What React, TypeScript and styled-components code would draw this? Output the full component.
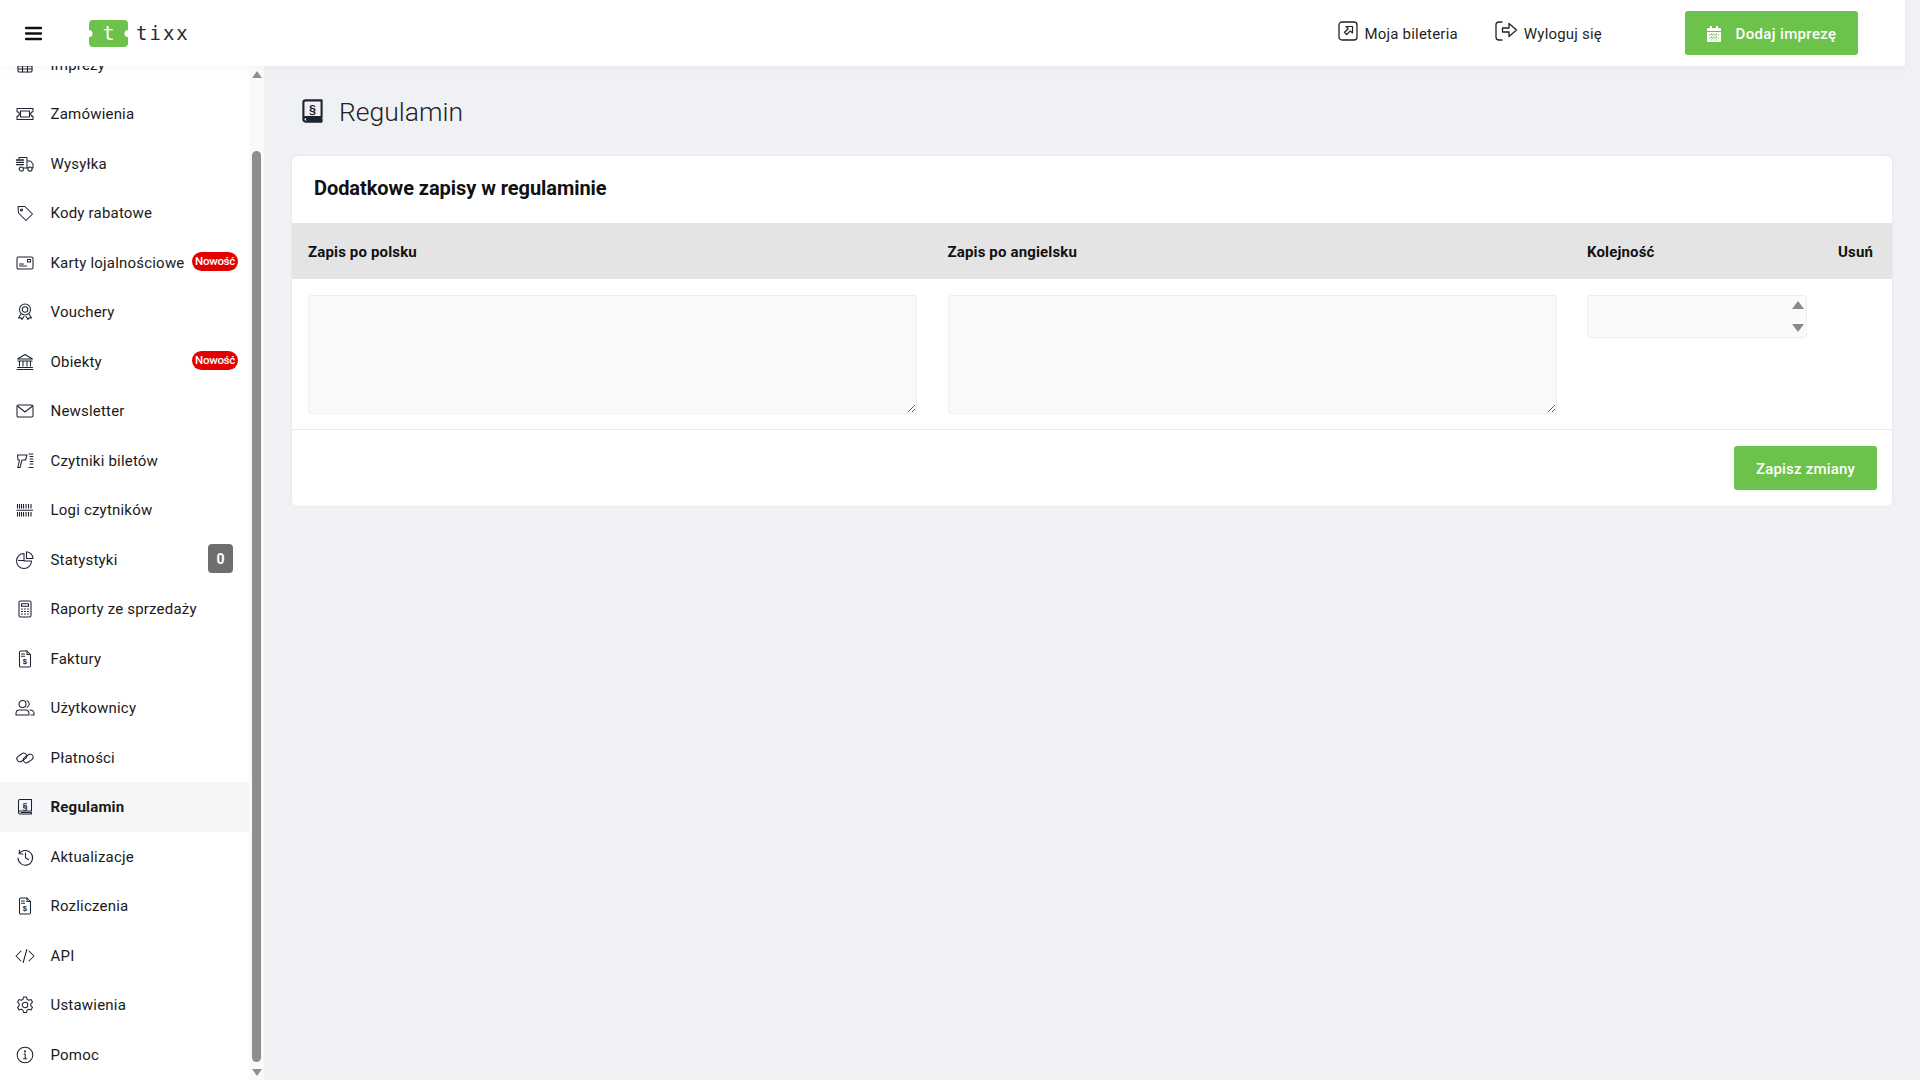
import React from "react";
import styled, { createGlobalStyle } from "styled-components";

const Global = createGlobalStyle`
  html, body { margin: 0; padding: 0; height: 100%; overflow: hidden; background: #f0f1f5; }
  body { font-family: Roboto, "Liberation Sans", sans-serif; color: #1a1a1a; }
  * { box-sizing: border-box; }
`;

const Page = styled.div`width: 1920px; height: 1080px; display: flex; flex-direction: column; overflow: hidden;`;
const TopBar = styled.header`
  width: 1905px; height: 66px; flex: none; background: #fff; display: flex; align-items: center;
  padding: 0 47px 0 25px; position: relative; z-index: 2; box-shadow: 0 2px 8px rgba(0,0,0,.035);
`;
const Burger = styled.svg`width: 17px; height: 15px; flex: none; margin-right: 46px;`;
const Logo = styled.div`display: flex; align-items: center; gap: 7px;`;
const Ticket = styled.div`
  width: 41px; height: 27px; display: flex; align-items: center; justify-content: center; position: relative;
  color: #fff; font: 400 20px/27px "DejaVu Sans Mono", monospace;
`;
const TicketShape = styled.svg`position: absolute; inset: 0; width: 41px; height: 27px;`;
const TicketLetter = styled.span`position: relative;`;
const LogoWord = styled.span`font: 400 19px/27px "DejaVu Sans Mono", monospace; letter-spacing: 2px; color: #2a2a2a;`;
const TopActions = styled.nav`margin-left: auto; display: flex; align-items: center;`;
const TopLink = styled.a<{ $gap: number; $iconGap: number }>`
  display: flex; align-items: center; gap: ${p => p.$iconGap}px; margin-right: ${p => p.$gap}px; padding-top: 1px;
  font-size: 15px; letter-spacing: .2px; color: #1f1f1f;
`;
const TopIcon = styled.svg`flex: none; margin-top: -5px;`;
const AddButton = styled.button`
  width: 173px; height: 44px; border: 0; border-radius: 3px; background: #6cc24a; color: #fff;
  display: flex; align-items: center; justify-content: center; gap: 15px; padding: 1px 0 0;
  font: 500 15px Roboto, sans-serif; letter-spacing: .35px;
`;
const Body = styled.div`flex: 1; display: flex; min-height: 0;`;
const Sidebar = styled.aside`width: 264px; flex: none; display: flex; overflow: hidden;`;
const Menu = styled.ul`width: 249px; flex: none; margin: -26.25px 0 0; padding: 0; list-style: none; background: #fff;`;
const Row = styled.li<{ $active?: boolean }>`
  height: 49.5px; display: flex; align-items: center; padding-left: 15px;
  background: ${p => (p.$active ? "#f5f6f8" : "#fff")};
  font-size: 15px; letter-spacing: .2px; font-weight: ${p => (p.$active ? 700 : 400)}; color: #1a1a1a; white-space: nowrap;
`;
const RowIcon = styled.svg`width: 20px; height: 20px; flex: none; margin-right: 15.5px;`;
const NewBadge = styled.span`
  margin-left: auto; margin-right: 11px; margin-top: -3px; width: 46px; height: 19px; flex: none; border-radius: 10px; background: #e30000; color: #fff;
  font-size: 11.5px; font-weight: 500; letter-spacing: -.3px; display: flex; align-items: center; justify-content: center;
`;
const CountBadge = styled.span`
  margin-left: auto; margin-right: 16px; margin-top: -2px; width: 25px; height: 29px; border-radius: 4px; background: #6e6e6e; color: #fff;
  font-size: 14px; font-weight: 700; display: flex; align-items: center; justify-content: center;
`;
const Track = styled.div`width: 15px; flex: none; background: #fafafa; display: flex; flex-direction: column; align-items: center;`;
const ArrowUp = styled.div`
  width: 0; height: 0; margin-top: 5px; border: 5px solid transparent; border-top: 0; border-bottom: 7px solid #8f8f8f; flex: none;
`;
const Thumb = styled.div`width: 9px; height: 911px; margin-top: 73px; border-radius: 5px; background: #8e8e8e; flex: none;`;
const ArrowDown = styled.div`
  width: 0; height: 0; margin-top: 7px; border: 5px solid transparent; border-bottom: 0; border-top: 7px solid #8f8f8f; flex: none;
`;
const Main = styled.main`flex: 1; min-width: 0; padding: 0 27px;`;
const Heading = styled.div`height: 89px; display: flex; align-items: center; padding: 1px 0 0 11px; gap: 16px;`;
const HeadingIcon = styled.svg`width: 21px; height: 24px; flex: none;`;
const HeadingText = styled.h1`margin: 0; font-size: 26.5px; font-weight: 300; color: #222;`;
const Card = styled.section`background: #fff; border: 1px solid #e9e9ec; border-radius: 6px; height: 352px; overflow: hidden;`;
const CardTitle = styled.h2`margin: 0; height: 67px; padding: 0 0 3px 22px; display: flex; align-items: center; font-size: 20px; letter-spacing: -.06px; font-weight: 700; color: #111;`;
const Grid = styled.div`
  display: grid; grid-template-columns: 609px 609px 220px 35.5px; column-gap: 30.5px; padding: 0 18px 0 16px;
`;
const HeadGrid = styled(Grid)`height: 56px; align-items: center; padding-top: 2px; background: #e4e4e4; font-size: 15px; letter-spacing: .15px; font-weight: 700; color: #111;`;
const UsunCell = styled.div`text-align: right; white-space: nowrap; justify-self: end;`;
const BodyGrid = styled(Grid)`height: 151px; padding-top: 16px; border-bottom: 1px solid #ececec;`;
const Area = styled.textarea`
  display: block; width: 609px; height: 119px; background: #f9f9f9; border: 1px solid #eeeeee; border-radius: 3px; outline: 0; resize: both; font: 14px Roboto, sans-serif;
`;
const NumberWrap = styled.div`position: relative; width: 220px; height: 43px;`;
const NumberInput = styled.input`
  display: block; width: 100%; height: 100%; background: #fafafa; border: 1px solid #eeeeee; border-radius: 3px; outline: 0;
  appearance: textfield;
  &::-webkit-inner-spin-button { display: none; }
`;
const Spinner = styled.div`
  position: absolute; top: 6px; right: 3px; width: 12px; height: 31px; display: flex; flex-direction: column; align-items: center; justify-content: space-between; pointer-events: none;
`;
const SpinUp = styled.i`width: 0; height: 0; border: 6px solid transparent; border-top: 0; border-bottom: 8px solid #8a8a8a;`;
const SpinDown = styled.i`width: 0; height: 0; border: 6px solid transparent; border-bottom: 0; border-top: 8px solid #8a8a8a;`;
const Footer = styled.div`display: flex; justify-content: flex-end; padding: 16px 15px 0 0;`;
const Save = styled.button`
  width: 143px; height: 44px; border: 0; border-radius: 3px; background: #6cc24a; color: #fff; padding: 1px 0 0;
  font: 500 15px Roboto, sans-serif; letter-spacing: .2px;
`;

const ico = { fill: "none", stroke: "#1d2430", strokeWidth: 1.05, strokeLinecap: "round", strokeLinejoin: "round" } as const;

const BookPaths = () => (
  <path d="M3.5 15V4A1.500 1.500 0 0 1 5 2.500h11.500V14H5a1.500 1.500 0 0 0-1.500 1.500A1.500 1.500 0 0 0 5 17h11.500v-1.500H6" />
);
const Section = styled.text`font: 700 9px "Liberation Sans", sans-serif; fill: #1d2430; stroke: none; text-anchor: middle;`;
const Dollar = styled.text`font: 700 7.5px "Liberation Sans", sans-serif; fill: #1d2430; stroke: none;`;

const InvoicePaths = () => (
  <>
    <path d="M4.500 3.200A1.200 1.200 0 0 1 5.700 2H12l3.500 3.500v11.300a1.200 1.200 0 0 1-1.200 1.200H5.700a1.200 1.200 0 0 1-1.200-1.200z" />
    <path d="M12 2v3.500h3.500M6.500 5h3M6.500 7.200h3" />
    <Dollar x="7.800" y="15">$</Dollar>
  </>
);

const icons: Record<string, React.ReactNode> = {
  calendar: <><rect x="3" y="4" width="14" height="13" rx="1" /><path d="M3 8h14M3 11h14M3 14h14M7.500 8v9M12.500 8v9M7 2.500v3M13 2.500v3" /></>,
  ticket: <path d="M2 4.500h16v3.200a2.300 2.300 0 0 0 0 4.600v3.200H2v-3.200a2.300 2.300 0 0 0 0-4.600zM5.500 7h9v6h-9z" />,
  truck: <><path d="M4 5V3.500h8V14H8.500M12 7h3.500L18 10v4h-1M12 14h1" /><circle cx="6.300" cy="15" r="2.100" /><circle cx="15" cy="15" r="2.100" /><path d="M1.500 6h7M1.500 8.300h7M1.500 10.600h7" strokeWidth="1.300" /></>,
  tag: <><path d="M3 3.500h7l7.500 7.500-6.500 6.500L3.500 10z" /><circle cx="6.500" cy="7" r="1" /></>,
  card: <><rect x="2" y="4" width="16" height="12" rx="1.500" /><path d="M4.500 13h7M4.500 11h4" /><rect x="12.500" y="6.500" width="3" height="2.500" /></>,
  award: <><circle cx="10" cy="7.500" r="5.500" /><circle cx="10" cy="7.500" r="2.800" /><path d="M6 12l-2.500 4 2.500-.3 1 1.800 2-3M14 12l2.500 4-2.500-.3-1 1.800-2-3" /></>,
  bank: <><path d="M2.500 7L10 2.500 17.500 7zM4.500 9v5M8 9v5M12 9v5M15.500 9v5M3 9h14M2.500 15.500h15M2 17.500h16" /></>,
  mail: <><rect x="2" y="4" width="16" height="12" rx="1.200" /><path d="M2.500 5l7.500 6 7.500-6" /></>,
  scanner: <><path d="M2.500 4h9.500l-1.500 5H7l-2 7.500H2.800L4.500 9H3z" /><path d="M14 3h4M15 5.500h3M15 8h3M15 10.500h3M15 13h3M14 16.500h4" /></>,
  barcode: <path strokeWidth="1.100" strokeLinecap="butt" d="M2.500 4v4.500M4.500 4v4.500M6.500 4v4.500M8.500 4v4.500M11 4v4.500M13.500 4v4.500M16 4v4.500M2.500 12v4.500M4.500 12v4.500M6.500 12v4.500M8.500 12v4.500M11 12v4.500M13.500 12v4.500M16 12v4.500M1.500 10.200h16.500" />,
  pie: <><path d="M9 3.500a7.500 7.500 0 1 0 7.500 7.500H9z" /><path d="M11.500 1.800a7 7 0 0 1 6.500 6.700h-6.500zM3.500 10.500h5.500" /></>,
  calc: <><rect x="4" y="2" width="12" height="16" rx="1.500" /><path d="M6.500 4.800h7v2.500h-7zM6.500 10h1M9.500 10h1M12.500 10h1M6.500 12.500h1M9.500 12.500h1M12.500 12.500h1M6.500 15h1M9.500 15h1M12.500 15h1" /></>,
  invoice: <InvoicePaths />,
  users: <><circle cx="7.500" cy="6" r="3.500" /><path d="M1 17v-1.500A3.500 3.500 0 0 1 4.500 12h6a3.500 3.500 0 0 1 3.500 3.500V17zM12 2.800a3.400 3.400 0 0 1 0 6.400M15 12a3.500 3.500 0 0 1 4 3.500V17h-3" /></>,
  link: <><rect x="1.500" y="6.500" width="10.500" height="6" rx="3" transform="rotate(-35 6.750 9.500)" /><rect x="8" y="7.500" width="10.500" height="6" rx="3" transform="rotate(-35 13.250 10.500)" /></>,
  book: <><BookPaths /><Section x="10" y="11.500">§</Section></>,
  history: <><path d="M4.500 3.200l-.3 3.600 3.600.3M4.200 6.800A7.300 7.300 0 1 1 3 11" /><path d="M10.500 6v4.800l3 2" /></>,
  code: <path d="M6 5l-5 5 5 5M14 5l5 5-5 5M11.800 3.500l-3.600 13" />,
  gear: <><circle cx="10" cy="10" r="2.800" /><path d="M8.500 2h3l.6 2.300 1.600.9 2.300-.7 1.500 2.600-1.700 1.700v1.800l1.700 1.700-1.500 2.600-2.300-.7-1.600.9-.6 2.300h-3l-.6-2.300-1.600-.9-2.300.7-1.500-2.600 1.700-1.700V8.800L2.600 7.100l1.500-2.600 2.300.7 1.600-.9z" /></>,
  info: <><circle cx="10" cy="10" r="7.800" /><path d="M9 9h1.200v4.500M8.500 13.800h3.200" /><path d="M10 6.200v.5" strokeWidth="1.800" /></>,
};

const items: { label: string; icon: string; badge?: "new" | "count"; active?: boolean }[] = [
  { label: "Imprezy", icon: "calendar" },
  { label: "Zamówienia", icon: "ticket" },
  { label: "Wysyłka", icon: "truck" },
  { label: "Kody rabatowe", icon: "tag" },
  { label: "Karty lojalnościowe", icon: "card", badge: "new" },
  { label: "Vouchery", icon: "award" },
  { label: "Obiekty", icon: "bank", badge: "new" },
  { label: "Newsletter", icon: "mail" },
  { label: "Czytniki biletów", icon: "scanner" },
  { label: "Logi czytników", icon: "barcode" },
  { label: "Statystyki", icon: "pie", badge: "count" },
  { label: "Raporty ze sprzedaży", icon: "calc" },
  { label: "Faktury", icon: "invoice" },
  { label: "Użytkownicy", icon: "users" },
  { label: "Płatności", icon: "link" },
  { label: "Regulamin", icon: "book", active: true },
  { label: "Aktualizacje", icon: "history" },
  { label: "Rozliczenia", icon: "invoice" },
  { label: "API", icon: "code" },
  { label: "Ustawienia", icon: "gear" },
  { label: "Pomoc", icon: "info" },
];

export default function App() {
  return (
    <Page>
      <Global />
      <TopBar>
        <Burger viewBox="0 0 17 15"><path d="M1 2h15M1 7.500h15M1 13h15" stroke="#111" strokeWidth="2.400" strokeLinecap="round" /></Burger>
        <Logo>
          <Ticket>
            <TicketShape viewBox="0 0 41 27">
              <path fill="#6cc24a" d="M5 0h31a4 4 0 0 1 4 4v6a3.500 3.500 0 0 0 0 7v6a4 4 0 0 1-4 4H5a4 4 0 0 1-4-4v-6a3.500 3.500 0 0 0 0-7V4a4 4 0 0 1 4-4z" />
            </TicketShape>
            <TicketLetter>t</TicketLetter>
          </Ticket>
          <LogoWord>tixx</LogoWord>
        </Logo>
        <TopActions>
          <TopLink $gap={37} $iconGap={7}>
            <TopIcon width="20" height="20" viewBox="0 0 20 20" {...ico} stroke="#222"><rect x="1" y="1" width="18" height="18" rx="3" strokeWidth="1.300" /><path d="M8 5.500h6.500V12l-2.200-2.200-3.600 3.700-2.200-2.200 3.700-3.600z" strokeWidth="1.200" /></TopIcon>
            Moja bileteria
          </TopLink>
          <TopLink $gap={83} $iconGap={6}>
            <TopIcon width="23" height="20" viewBox="0 0 23 20" {...ico} stroke="#222"><path d="M7 1H4a3 3 0 0 0-3 3v12a3 3 0 0 0 3 3h3" strokeWidth="1.300" /><path d="M7.500 7H14V2.500L21.500 9 14 15.500V11H7.500z" strokeWidth="1.300" /></TopIcon>
            Wyloguj się
          </TopLink>
          <AddButton>
            <svg width="14" height="16" viewBox="0 0 14 16"><path fill="#fff" d="M3 0h2v2h4V0h2v2h2a1 1 0 0 1 1 1v2H0V3a1 1 0 0 1 1-1h2zM0 6h14v9a1 1 0 0 1-1 1H1a1 1 0 0 1-1-1z" /><path stroke="#6cc24a" strokeWidth="1" d="M2 9h10M2 12h10M4.500 7.500v7M7 7.500v7M9.500 7.500v7" strokeDasharray="1.500 1.500" /></svg>
            Dodaj imprezę
          </AddButton>
        </TopActions>
      </TopBar>
      <Body>
        <Sidebar>
          <Menu>
            {items.map(it => (
              <Row key={it.label} $active={it.active}>
                <RowIcon viewBox="0 0 20 20" {...ico}>{icons[it.icon]}</RowIcon>
                {it.label}
                {it.badge === "new" && <NewBadge>Nowość</NewBadge>}
                {it.badge === "count" && <CountBadge>0</CountBadge>}
              </Row>
            ))}
          </Menu>
          <Track>
            <ArrowUp />
            <Thumb />
            <ArrowDown />
          </Track>
        </Sidebar>
        <Main>
          <Heading>
            <HeadingIcon viewBox="2.500 1.500 15 16.500" preserveAspectRatio="none" {...ico} strokeWidth={1.500}><BookPaths /><Section x="10" y="11.500">§</Section></HeadingIcon>
            <HeadingText>Regulamin</HeadingText>
          </Heading>
          <Card>
            <CardTitle>Dodatkowe zapisy w regulaminie</CardTitle>
            <HeadGrid>
              <div>Zapis po polsku</div>
              <div>Zapis po angielsku</div>
              <div>Kolejność</div>
              <UsunCell>Usuń</UsunCell>
            </HeadGrid>
            <BodyGrid>
              <Area />
              <Area />
              <NumberWrap>
                <NumberInput type="number" />
                <Spinner><SpinUp /><SpinDown /></Spinner>
              </NumberWrap>
              <div />
            </BodyGrid>
            <Footer><Save>Zapisz zmiany</Save></Footer>
          </Card>
        </Main>
      </Body>
    </Page>
  );
}
